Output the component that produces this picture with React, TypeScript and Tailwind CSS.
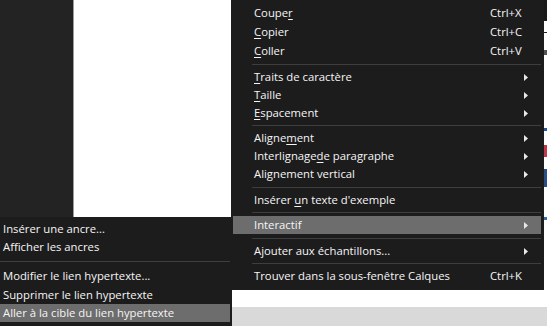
import React from "react";

type Item =
  | { kind: "sep"; h: number }
  | { kind: "item"; h: number; label: React.ReactNode; shortcut?: string; arrow?: boolean; active?: boolean };

const Arrow = () => (
  <svg width="4" height="7" viewBox="0 0 4 7" className="block">
    <path d="M0 0 L4 3.5 L0 7 Z" fill="#e8e8e8" />
  </svg>
);

const U = ({ children }: { children: React.ReactNode }) => (
  <span className="underline underline-offset-[2px] decoration-[1px]">{children}</span>
);

const mainItems: Item[] = [
  { kind: "item", h: 19, label: <>Coupe<U>r</U></>, shortcut: "Ctrl+X" },
  { kind: "item", h: 19, label: <><U>C</U>opier</>, shortcut: "Ctrl+C" },
  { kind: "item", h: 19, label: <><U>C</U>oller</>, shortcut: "Ctrl+V" },
  { kind: "sep", h: 8 },
  { kind: "item", h: 18, label: <><U>T</U>raits de caractère</>, arrow: true },
  { kind: "item", h: 18, label: <><U>T</U>aille</>, arrow: true },
  { kind: "item", h: 18, label: <><U>E</U>spacement</>, arrow: true },
  { kind: "sep", h: 7 },
  { kind: "item", h: 18, label: <>Aligne<U>m</U>ent</>, arrow: true },
  { kind: "item", h: 18, label: <>Interlignage<U>d</U>e paragraphe</>, arrow: true },
  { kind: "item", h: 18, label: <>Alignement vertical</>, arrow: true },
  { kind: "sep", h: 8 },
  { kind: "item", h: 18, label: <>Insérer <U>u</U>n texte d'exemple</> },
  { kind: "sep", h: 7 },
  { kind: "item", h: 18, label: <>Interactif</>, arrow: true, active: true },
  { kind: "sep", h: 8 },
  { kind: "item", h: 18, label: <>Ajouter aux échantillons...</>, arrow: true },
  { kind: "sep", h: 7 },
  { kind: "item", h: 18, label: <>Trouver dans la sous-fenêtre Calques</>, shortcut: "Ctrl+K" },
];

const subItems: Item[] = [
  { kind: "item", h: 19, label: <>Insérer une ancre...</> },
  { kind: "item", h: 18, label: <>Afficher les ancres</> },
  { kind: "sep", h: 10 },
  { kind: "item", h: 19, label: <>Modifier le lien hypertexte...</> },
  { kind: "item", h: 19, label: <>Supprimer le lien hypertexte</> },
  { kind: "item", h: 18, label: <>Aller à la cible du lien hypertexte</>, active: true },
];

export default function App() {
  return (
    <div
      className="relative w-[547px] h-[326px] overflow-hidden bg-white text-[11.3px] text-[#f5f5f5]"
      style={{ fontFamily: "'Open Sans', 'Noto Sans', sans-serif" }}
    >
      {/* background app */}
      <div className="flex h-full">
        <div className="w-[73px] bg-[#232323]" />
        <div className="w-px bg-[#9c9c9c]" />
        <div className="flex-1 flex flex-col">
          <div className="flex-1 bg-white flex justify-end">
            <div className="w-[3px] flex flex-col">
              <div className="h-[20px] bg-[#1a1a1a]" />
              <div className="h-[13px] bg-white border-y border-[#222]" />
              <div className="h-[17px] bg-white" />
              <div className="h-[5px] bg-[#555]" />
              <div className="h-[73px] bg-white" />
              <div className="h-[3px] bg-[#2c5c9a]" />
              <div className="h-[14px] bg-white" />
              <div className="h-[12px] bg-[#c23a4a]" />
              <div className="h-[12px] bg-white" />
              <div className="h-[18px] bg-[#2a4f86]" />
              <div className="h-[30px] bg-white" />
              <div className="h-[3px] bg-[#3a6fb5]" />
              <div className="flex-1 bg-white" />
            </div>
          </div>
          <div className="h-[19px] bg-[#d9d9d9]" />
        </div>
      </div>

      {/* main context menu */}
      <div className="absolute left-[231px] top-0 w-[313px] h-[290px] bg-[#1d1c1d] pt-[3px] leading-none">
        {mainItems.map((it, i) =>
          it.kind === "sep" ? (
            <div key={i} style={{ height: it.h }} className="ml-[2px] mr-[3px] pl-[19px] flex items-center">
              <div className="h-px flex-1 bg-[#3e3e3e]" />
            </div>
          ) : (
            <div
              key={i}
              style={{ height: it.h }}
              className={
                it.active
                  ? "ml-[2px] mr-[3px] pl-[21px] flex items-center bg-[#6d6d6d]"
                  : "ml-[2px] mr-[3px] pl-[21px] flex items-center"
              }
            >
              <div className="flex-1 whitespace-nowrap">{it.label}</div>
              <div className="w-[51px] flex items-center">
                {it.shortcut ? <span>{it.shortcut}</span> : null}
                {it.arrow ? (
                  <span className="ml-[34px]">
                    <Arrow />
                  </span>
                ) : null}
              </div>
            </div>
          )
        )}
      </div>

      {/* submenu */}
      <div className="absolute left-[-30px] top-[217px] w-[262px] h-[112px] bg-[#1d1c1d] pt-[2px] leading-none">
        {subItems.map((it, i) =>
          it.kind === "sep" ? (
            <div key={i} style={{ height: it.h }} className="ml-[2px] mr-[2px] flex items-center">
              <div className="h-px flex-1 bg-[#3e3e3e]" />
            </div>
          ) : (
            <div
              key={i}
              style={{ height: it.h }}
              className={
                it.active
                  ? "ml-[2px] mr-[2px] pl-[31px] flex items-center bg-[#6d6d6d]"
                  : "ml-[2px] mr-[2px] pl-[31px] flex items-center"
              }
            >
              <div className="whitespace-nowrap">{it.label}</div>
            </div>
          )
        )}
      </div>
    </div>
  );
}
